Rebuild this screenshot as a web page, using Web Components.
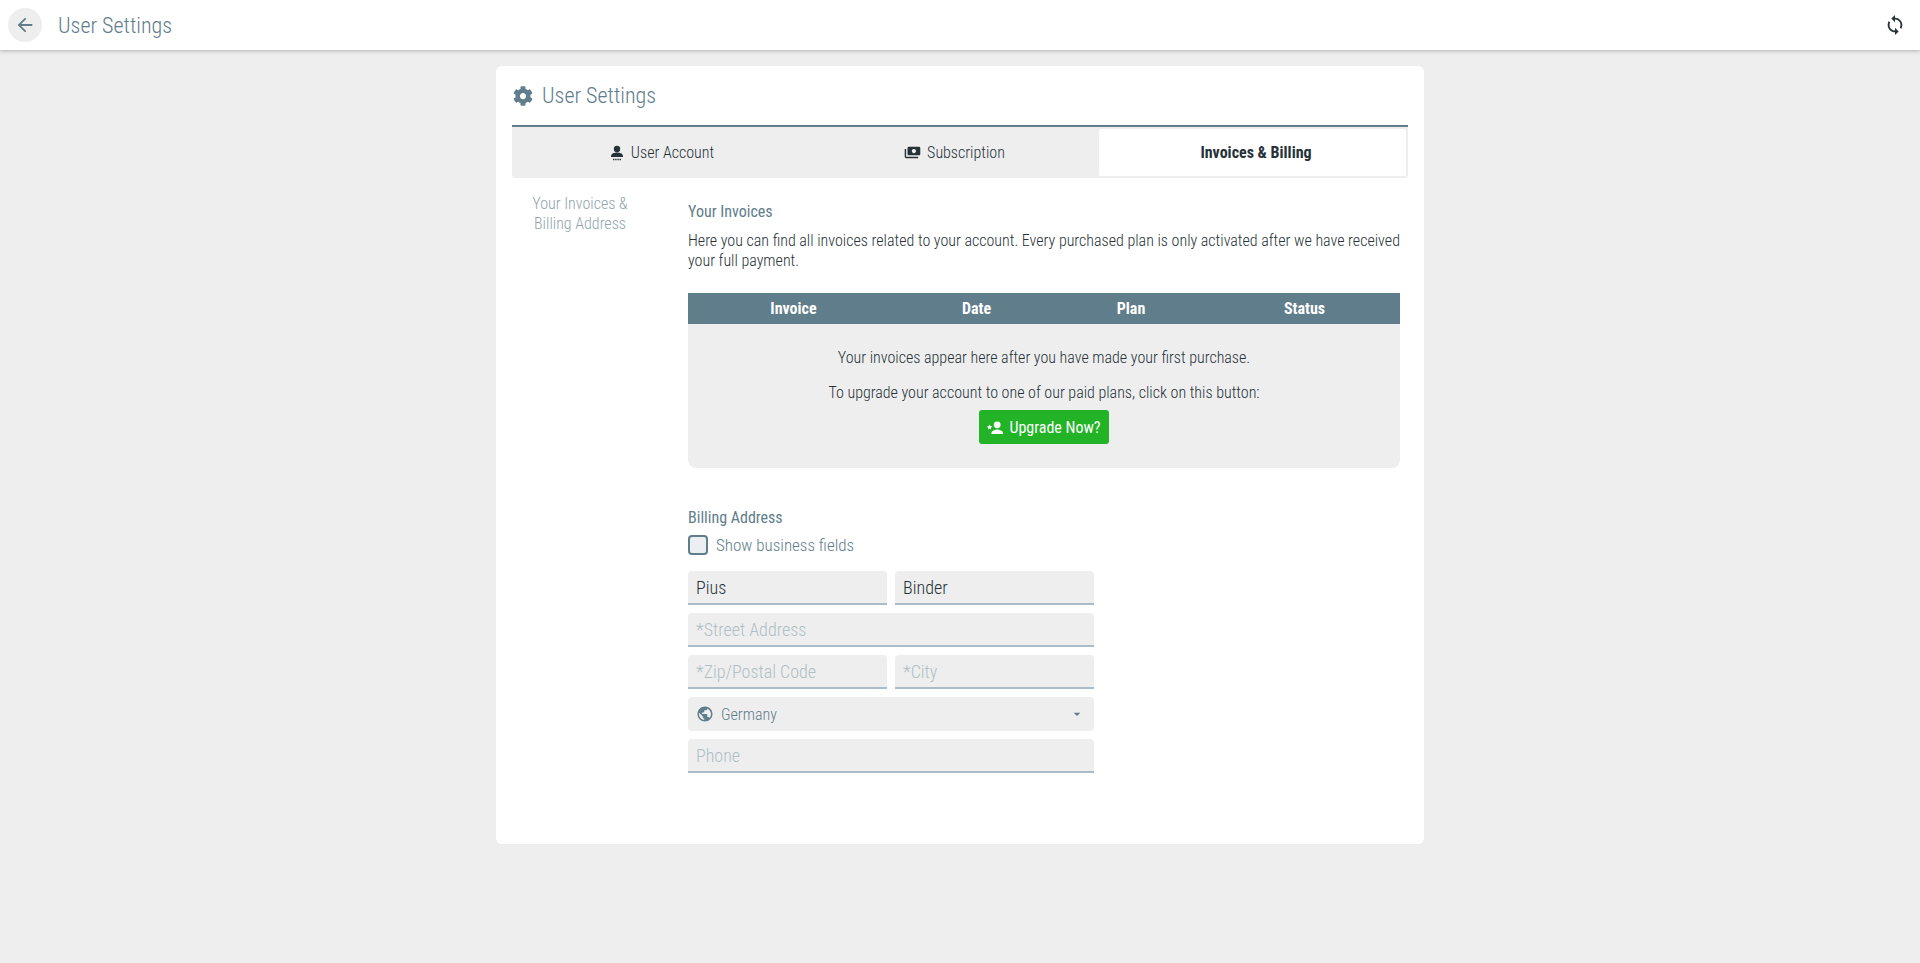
<!DOCTYPE html>
<html><head><meta charset="utf-8"><style>
html,body{margin:0;height:100%;background:#eee}
body{font-family:Roboto,sans-serif;font-stretch:75%;font-weight:300;color:#263238;overflow:hidden}
</style></head><body>
<app-shell></app-shell>
<template id="t-bar"><style>
:host{display:flex;align-items:center;height:50px;background:#fff;box-shadow:0 1px 4px rgba(0,0,0,.25);padding:0 8px;gap:16px;position:relative}
.b{width:34px;height:34px;border-radius:50%;background:#eee;display:flex;align-items:center;justify-content:center}
.t{font-size:22px;color:#607d8b;flex:1}
svg{display:block}
</style><div class="b"><svg width="22" height="22" viewBox="0 0 24 24" fill="#607d8b"><path d="M20 11H7.83l5.59-5.59L12 4l-8 8 8 8 1.41-1.41L7.83 13H20z"/></svg></div><div class="t">User Settings</div><svg width="22" height="22" viewBox="0 0 24 24" fill="#263238" style="margin-right:6px"><path d="M12 4V1L8 5l4 4V6c3.31 0 6 2.69 6 6 0 1.01-.25 1.97-.7 2.8l1.46 1.46C19.54 15.03 20 13.57 20 12c0-4.42-3.58-8-8-8zm0 14c-3.31 0-6-2.69-6-6 0-1.01.25-1.97.7-2.8L5.24 7.74C4.46 8.97 4 10.43 4 12c0 4.42 3.58 8 8 8v3l4-4-4-4v3z"/></svg></template>
<template id="t-shell"><style>
:host{display:block}
main{display:flex;justify-content:center;padding-top:16px}
.card{width:928px;height:778px;box-sizing:border-box;background:#fff;border-radius:6px;padding:0 16px}
.h{display:flex;align-items:center;gap:9px;height:59px;font-size:22px;color:#607d8b;padding-left:1px}
.tabs{display:grid;grid-template-columns:300px 285px 2px 1fr;border-top:2px solid #607d8b;background:#eee;height:53px;border-radius:0 0 4px 4px;box-sizing:border-box;padding:2px 2px 2px 0}
.tab{display:flex;align-items:center;justify-content:center;gap:6px;font-size:16px;color:#263238}
.tab.on{background:#fff;font-weight:700;border-radius:2px;padding-left:7px}
.cols{display:flex}
nav{width:136px;padding-top:16px;font-size:16px;line-height:20px;color:#90a4ae;text-align:center}
.c{margin-left:40px;width:712px;padding-top:24px;font-size:16px}
h3{font-size:16px;font-weight:400;color:#607d8b;margin:0;line-height:20px}
p{margin:0}
.d{margin-top:9px;line-height:20px}
.th{display:grid;grid-template-columns:211px 155px 152px 194px;background:#607d8b;color:#fff;font-weight:700;height:31px;align-items:center;text-align:center;margin-top:22px}
.th span:nth-child(3){padding-left:2px}
.th span:last-child{padding-left:3px}
.em{background:#eee;border-radius:0 0 8px 8px;height:144px;text-align:center;padding-top:24px;box-sizing:border-box;line-height:20px}
.em p+p{margin-top:15px}
.btn{display:inline-flex;align-items:center;gap:6px;height:34px;width:130px;box-sizing:border-box;padding-top:1px;justify-content:center;background:#22b327;color:#fff;font-weight:400;border-radius:3px;margin-top:7px;vertical-align:top}
.ba{margin-top:40px}
.ck{display:flex;align-items:center;gap:8px;margin-top:7px;color:#607d8b;font-size:17px;line-height:20px}
.box{width:16px;height:16px;border:2px solid #607d8b;border-radius:4px;background:#eceff1}
form{display:grid;grid-template-columns:199px 199px;gap:8px;margin-top:16px;width:406px}
.w{grid-column:1/3}
.sel{grid-column:1/3;height:34px;background:#eee;border-radius:4px;display:flex;align-items:center;padding:0 9px 0 8px;gap:7px;color:#607d8b;font-size:16px}
.sel span{flex:1}
svg{display:block}
</style>
<bar-top></bar-top>
<main><div class="card">
<div class="h"><svg width="20" height="20" viewBox="0 0 512 512" fill="#607d8b"><path d="M487.4 315.7l-42.6-24.6c4.3-23.2 4.3-47 0-70.2l42.6-24.6c4.9-2.8 7.1-8.6 5.5-14-11.1-35.6-30-67.8-54.7-94.6-3.8-4.1-10-5.1-14.8-2.3L380.8 110c-17.9-15.4-38.5-27.3-60.8-35.1V25.8c0-5.6-3.9-10.5-9.4-11.7-36.7-8.2-74.3-7.8-109.2 0-5.5 1.2-9.4 6.1-9.4 11.7V75c-22.2 7.9-42.8 19.8-60.8 35.1L88.7 85.5c-4.9-2.8-11-1.9-14.8 2.3-24.7 26.7-43.6 58.9-54.7 94.6-1.7 5.4.6 11.2 5.5 14L67.3 221c-4.3 23.2-4.3 47 0 70.2l-42.6 24.6c-4.9 2.8-7.1 8.6-5.5 14 11.1 35.6 30 67.8 54.7 94.6 3.8 4.1 10 5.1 14.8 2.3l42.6-24.6c17.9 15.4 38.5 27.3 60.8 35.1v49.2c0 5.6 3.9 10.5 9.4 11.7 36.7 8.2 74.3 7.8 109.2 0 5.5-1.2 9.4-6.1 9.4-11.7v-49.2c22.2-7.9 42.8-19.8 60.8-35.1l42.6 24.6c4.9 2.8 11 1.9 14.8-2.3 24.7-26.7 43.6-58.9 54.7-94.6 1.5-5.5-.7-11.3-5.6-14.1zM256 336c-44.1 0-80-35.9-80-80s35.9-80 80-80 80 35.9 80 80-35.9 80-80 80z"/></svg>User Settings</div>
<div class="tabs">
<div class="tab" style="gap:7px"><svg width="14" height="16" viewBox="0 0 14 16" fill="#263238"><circle cx="7" cy="4" r="3.2"/><path d="M1 11c0-2.6 3.6-3.6 6-3.6s6 1 6 3.6v1H1z"/><path d="M3 13.8h1.4v1.4H3zM5.2 13.8h1.4v1.4H5.2zM7.4 13.8h1.4v1.4H7.4zM9.6 13.8H11v1.4H9.6z"/></svg>User Account</div>
<div class="tab"><svg width="17" height="17" viewBox="0 0 24 24" fill="#263238" style="transform:scaleX(-1)"><path d="M19 14V6c0-1.1-.9-2-2-2H3c-1.1 0-2 .9-2 2v8c0 1.1.9 2 2 2h14c1.1 0 2-.9 2-2zm-9-1c-1.66 0-3-1.34-3-3s1.34-3 3-3 3 1.34 3 3-1.34 3-3 3zm13-6v11c0 1.1-.9 2-2 2H4v-2h17V7h2z"/></svg>Subscription</div>
<div></div>
<div class="tab on">Invoices &amp; Billing</div>
</div>
<div class="cols"><nav>Your Invoices &amp;<br>Billing Address</nav>
<div class="c"><h3>Your Invoices</h3>
<p class="d">Here you can find all invoices related to your account. Every purchased plan is only activated after we have received your full payment.</p>
<div class="th"><span>Invoice</span><span>Date</span><span>Plan</span><span>Status</span></div>
<div class="em"><p>Your invoices appear here after you have made your first purchase.</p><p>To upgrade your account to one of our paid plans, click on this button:</p>
<div class="btn"><svg width="16" height="14" viewBox="0 0 16 14" fill="#fff"><circle cx="10.2" cy="3.8" r="3.4"/><path d="M4.4 13v-.8c0-2.4 3.8-3.6 5.8-3.6s5.8 1.2 5.8 3.6v.8z"/><path d="M2.6 3.4l.8 1.7 1.8.3-1.3 1.3.3 1.8-1.6-.9-1.6.9.3-1.8L0 5.4l1.8-.3z"/></svg>Upgrade Now?</div></div>
<h3 class="ba">Billing Address</h3>
<div class="ck"><div class="box"></div>Show business fields</div>
<form>
<text-field value="Pius"></text-field><text-field value="Binder"></text-field>
<text-field class="w" ph="*Street Address"></text-field>
<text-field ph="*Zip/Postal Code"></text-field><text-field ph="*City"></text-field>
<div class="sel"><svg width="18" height="18" viewBox="0 0 24 24" fill="#607d8b"><path d="M12 2C6.48 2 2 6.48 2 12s4.48 10 10 10 10-4.48 10-10S17.52 2 12 2zm-1 17.93c-3.95-.49-7-3.85-7-7.93 0-.62.08-1.21.21-1.79L9 15v1c0 1.1.9 2 2 2v1.93zm6.9-2.54c-.26-.81-1-1.39-1.9-1.39h-1v-3c0-.55-.45-1-1-1H8v-2h2c.55 0 1-.45 1-1V7h2c1.1 0 2-.9 2-2v-.41c2.93 1.19 5 4.06 5 7.41 0 2.08-.8 3.97-2.1 5.39z"/></svg><span>Germany</span><svg width="16" height="16" viewBox="0 0 24 24" fill="#607d8b"><path d="M7 10l5 5 5-5z"/></svg></div>
<text-field class="w" ph="Phone"></text-field>
</form>
</div></div>
</div></main></template>
<template id="t-field"><style>
:host{display:flex;align-items:center;height:34px;box-sizing:border-box;background:#eee;border-bottom:2px solid #a9bcc7;border-radius:4px 4px 0 0;padding:0 8px;font-size:18px;color:#263238}
.p{color:#b0bec5}
</style><span id="s"></span></template>
<script>
const mk=(n,id)=>customElements.define(n,class extends HTMLElement{constructor(){super();this.attachShadow({mode:'open'}).append(document.getElementById(id).content.cloneNode(true))}});
mk('bar-top','t-bar');
customElements.define('text-field',class extends HTMLElement{constructor(){super();this.attachShadow({mode:'open'}).append(document.getElementById('t-field').content.cloneNode(true))}
connectedCallback(){const s=this.shadowRoot.getElementById('s');const p=this.getAttribute('ph');s.textContent=p||this.getAttribute('value');if(p)s.className='p'}});
mk('app-shell','t-shell');
</script>
</body></html>
